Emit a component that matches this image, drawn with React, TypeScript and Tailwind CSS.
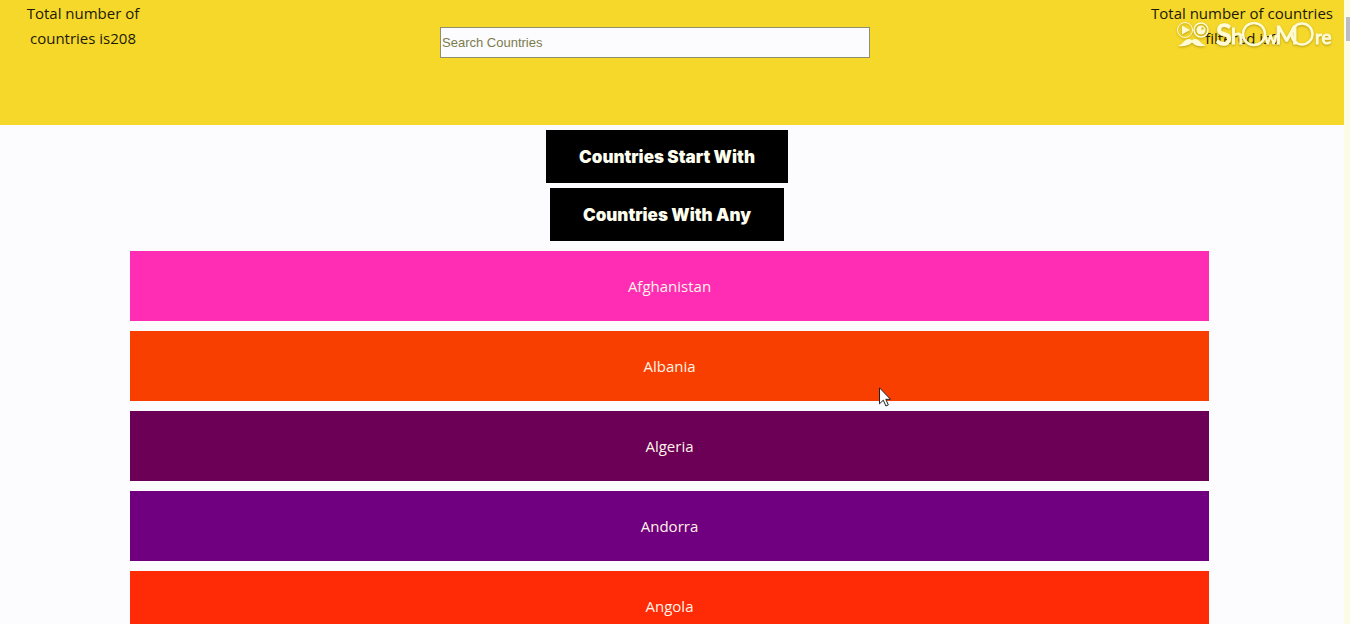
const countries = [
  { name: 'Afghanistan', color: 'bg-[#ff2cb4]' },
  { name: 'Albania', color: 'bg-[#f93f00]' },
  { name: 'Algeria', color: 'bg-[#6b0056]' },
  { name: 'Andorra', color: 'bg-[#70007f]' },
  { name: 'Angola', color: 'bg-[#ff2a06]' },
];

function Watermark() {
  return (
    <svg
      className="pointer-events-none absolute top-4 right-3 h-9 w-40 drop-shadow-[0_1px_1px_rgba(120,100,0,0.5)]"
      viewBox="0 0 160 36"
      fill="none"
      stroke="#fffbd5"
      aria-hidden="true"
    >
      <circle cx="13" cy="14" r="7.5" strokeWidth="1" />
      <path d="M10 9.5 18 14l-8 4.5z" fill="#fffbd5" stroke="none" />
      <circle cx="29" cy="14" r="7" strokeWidth="1.5" />
      <circle cx="29" cy="14" r="4.5" fill="#fffbd5" stroke="none" />
      <circle cx="30.5" cy="12.5" r="1.3" fill="#e0c020" stroke="none" />
      <path
        d="M20 24c-3-2-6-1-8 1.500-2 2.500-4 3-6 4.500 5 .5 11 0 14-3.500 4 4.500 10 4 14 3-3-1-4-2-6-4-2-2.500-5-3.500-8-1.500z"
        fill="#fffbd5"
        stroke="none"
      />
      <g
        fill="#fffbd5"
        stroke="#fffbd5"
        fontFamily="Lato, sans-serif"
      >
        <text x="44" y="29" fontSize="29" strokeWidth="1.5">S</text>
        <text x="59" y="28" fontSize="22" strokeWidth="1">h</text>
        <text x="92" y="28" fontSize="17" strokeWidth="1">w</text>
        <text x="103" y="28" fontSize="25" strokeWidth="1">M</text>
        <text x="143" y="28" fontSize="19" strokeWidth="1">re</text>
      </g>
      <circle cx="82" cy="18" r="11" strokeWidth="2.5" />
      <circle cx="130" cy="18" r="10.5" strokeWidth="2.5" />
    </svg>
  );
}

function Pointer() {
  return (
    <svg
      className="pointer-events-none absolute top-[387px] left-[879px] h-5 w-3"
      viewBox="0 0 12 20"
      aria-hidden="true"
    >
      <path
        d="M.5.8v16l3.8-3.6 2.6 5.8 2.400-1.100-2.500-5.600h4.700z"
        fill="#fff"
        stroke="#222"
        strokeWidth="1"
      />
    </svg>
  );
}

export default function App() {
  return (
    <div className="relative flex h-screen overflow-hidden bg-[#fcfcfe] font-['Open_Sans',sans-serif] text-[15px] leading-[25px]">
      <div className="min-w-0 flex-1">
        <header className="relative flex h-[125px] justify-between bg-[#f6d82b] text-[#1c1a08]">
          <p className="w-[170px] pt-px pr-6 pl-5 text-center">Total number of countries is208</p>
          <input
            type="text"
            aria-label="Search Countries"
            placeholder="Search Countries"
            className="mt-[27px] h-[31px] w-[430px] border border-[#8f8f70] bg-[#fcfcfe] px-px font-['Liberation_Sans',sans-serif] text-[13px] text-black outline-none placeholder:text-[#7b7b4c]"
          />
          <p className="w-[204px] px-1 pt-px text-center">Total number of countries filtered is0</p>
          <Watermark />
        </header>

        <main>
          <div className="flex flex-col items-center gap-[5px] pt-[5px] pr-2.5 font-['Inter',sans-serif] text-[17px] font-black text-[#fffff0]">
            <button type="button" className="h-[53px] bg-black px-[33px] pt-0.5">
              Countries Start With
            </button>
            <button type="button" className="h-[53px] bg-black px-[33px] pt-0.5">
              Countries With Any
            </button>
          </div>

          <ul className="mr-[135px] ml-[130px] flex flex-col gap-2.5 pt-2.5 text-center text-[#fff4e6]">
            {countries.map((country) => (
              <li key={country.name} className={`flex h-[70px] items-center justify-center ${country.color}`}>
                {country.name}
              </li>
            ))}
          </ul>
        </main>
      </div>

      <div className="w-1.5 bg-[#fbfbe6] pt-[17px] pl-0.5" aria-hidden="true">
        <div className="h-6 bg-[#bcbcc4]" />
      </div>
      <Pointer />
    </div>
  );
}
